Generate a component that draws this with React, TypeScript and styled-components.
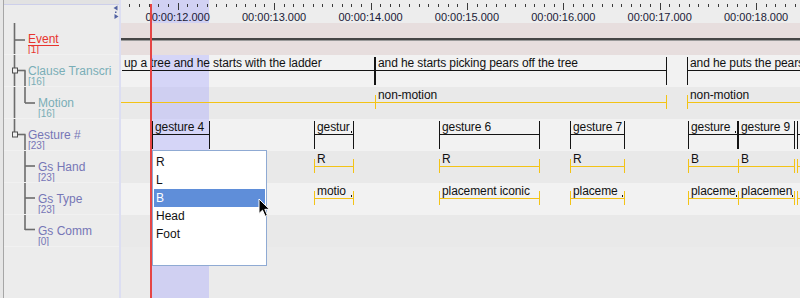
import styled, { createGlobalStyle } from 'styled-components'

const GlobalStyle = createGlobalStyle`
  html, body {
    margin: 0;
    padding: 0;
    background: #ebebeb;
  }
  body {
    font-family: 'Liberation Sans', Arial, sans-serif;
  }
`

// time axis: page x of 00:00:12.000 is 177.7, the time view starts at page x 121
const VIEW_X = 121
const PX_PER_SEC = 96.4
const SEC12 = 177.7 - VIEW_X
const YELLOW = '#f3c316'
const INK = '#141414'

type Seg = { x1: number; x2: number; text?: string; open?: boolean; cut?: boolean }

const clauses: Seg[] = [
  { x1: 121, x2: 374, text: 'up a tree and he starts with the ladder', open: true },
  { x1: 375, x2: 666, text: 'and he starts picking pears off the tree' },
  { x1: 687, x2: 900, text: 'and he puts the pears' },
]

const motions: Seg[] = [
  { x1: 121, x2: 375, open: true },
  { x1: 375, x2: 666, text: 'non-motion' },
  { x1: 687, x2: 900, text: 'non-motion' },
]

const gestures: Seg[] = [
  { x1: 152, x2: 209, text: 'gesture 4' },
  { x1: 314, x2: 353, text: 'gestur', cut: true },
  { x1: 439, x2: 539, text: 'gesture 6' },
  { x1: 570, x2: 624, text: 'gesture 7' },
  { x1: 688, x2: 737, text: 'gesture', cut: true },
  { x1: 738, x2: 794, text: 'gesture 9' },
  { x1: 797, x2: 900 },
]

const hands: Seg[] = [
  { x1: 152, x2: 209 },
  { x1: 314, x2: 353, text: 'R' },
  { x1: 439, x2: 539, text: 'R' },
  { x1: 570, x2: 624, text: 'R' },
  { x1: 688, x2: 738, text: 'B' },
  { x1: 738, x2: 794, text: 'B' },
  { x1: 797, x2: 900 },
]

const types: Seg[] = [
  { x1: 152, x2: 209 },
  { x1: 314, x2: 353, text: 'motio', cut: true },
  { x1: 439, x2: 539, text: 'placement iconic' },
  { x1: 570, x2: 624, text: 'placeme', cut: true },
  { x1: 688, x2: 738, text: 'placeme', cut: true },
  { x1: 738, x2: 794, text: 'placemen', cut: true },
  { x1: 797, x2: 900 },
]

const tiers = [
  { name: 'Event', count: 1, level: 0, color: '#e8342e', active: true },
  { name: 'Clause Transcri', count: 16, level: 0, color: '#7aaeb7' },
  { name: 'Motion', count: 16, level: 1, color: '#7aaeb7' },
  { name: 'Gesture #', count: 23, level: 0, color: '#7676b6' },
  { name: 'Gs Hand', count: 23, level: 1, color: '#7676b6' },
  { name: 'Gs Type', count: 23, level: 1, color: '#7676b6' },
  { name: 'Gs Comm', count: 0, level: 1, color: '#7676b6' },
]

const options = ['R', 'L', 'B', 'Head', 'Foot']

const Screen = styled.div`
  display: flex;
  width: 800px;
  height: 298px;
  overflow: hidden;
  background: #ebebeb;
`

/* ---------- tier names ---------- */

const LeftPanel = styled.div`
  width: ${VIEW_X}px;
  flex: none;
  display: flex;
  background: #e6e6e6;
`

const Frame = styled.div`
  flex: 1;
  margin-left: 3px;
  display: flex;
  flex-direction: column;
  background: #ececec;
  border-left: 1px solid #a6a6a6;
  border-right: 2px solid #dcdef2;
`

const PanelHeader = styled.div`
  height: 23px;
  box-sizing: border-box;
  flex: none;
  border-top: 4px solid #e2e2e2;
  display: flex;
  justify-content: flex-end;
  align-items: flex-start;
  padding-top: 1px;
  box-shadow: inset 0 1px 0 #cdcfea;
`

const TierTree = styled.div`
  position: relative;
  flex: 1;
  display: flex;
  flex-direction: column;
`

const TreeLines = styled.svg`
  position: absolute;
  left: 0;
  top: 0;
`

const TierLabel = styled.div<{ $level: number; $color: string }>`
  position: relative;
  height: 32px;
  box-sizing: border-box;
  padding: 10px 0 0 ${(p) => 24 + p.$level * 10}px;
  display: flex;
  flex-direction: column;
  align-items: flex-start;
  color: ${(p) => p.$color};
  border-bottom: 1px solid #f1f1f1;
  overflow: hidden;
`

const TierName = styled.span<{ $active?: boolean }>`
  display: inline-block;
  font-size: 12px;
  line-height: 12px;
  white-space: nowrap;
  box-shadow: ${(p) => (p.$active ? '0 1px 0 currentColor' : 'none')};
`

const TierCount = styled.span`
  font-size: 10px;
  line-height: 8px;
  margin-top: 1px;
`

/* ---------- time view ---------- */

const TimeArea = styled.div`
  position: relative;
  flex: 1;
  display: flex;
  flex-direction: column;
  overflow: hidden;
  background: #ebebeb;
`

const Ruler = styled.div`
  position: relative;
  height: 23px;
  flex: none;
  background: #ededed;
`

const TickMarks = styled.svg`
  position: absolute;
  left: 0;
  top: 0;
  z-index: 2;
`

const TimeLabel = styled.span`
  position: absolute;
  top: 11px;
  transform: translateX(-50%);
  font-size: 11px;
  line-height: 12px;
  color: #1a1a36;
  white-space: nowrap;
  z-index: 2;
`

const TierRow = styled.div<{ $shade: 'event' | 'light' | 'dark' }>`
  position: relative;
  height: 32px;
  flex: none;
  background: ${(p) => (p.$shade === 'event' ? '#e7dede' : p.$shade === 'light' ? '#f2f2f2' : '#e9e9e9')};
  ${(p) => (p.$shade === 'event' ? 'z-index: 2;' : '')}
`

const EventLine = styled.div`
  position: absolute;
  left: 0;
  right: 0;
  top: 15px;
  height: 2px;
  background: #464646;
  box-shadow: 0 1px 0 #9a9a9a;
`

const Block = styled.div<{ $open?: boolean }>`
  position: absolute;
  z-index: 2;
  top: 2px;
  height: 28px;
  box-sizing: border-box;
  border-left: 1px solid ${(p) => (p.$open ? 'transparent' : INK)};
  border-right: 1px solid ${INK};
  overflow: hidden;

  &::after {
    content: '';
    position: absolute;
    left: 0;
    right: 0;
    top: 13px;
    height: 1px;
    background: ${INK};
  }
`

const DepBlock = styled.div`
  position: absolute;
  z-index: 2;
  top: 0;
  height: 32px;
  overflow: hidden;

  &::after {
    content: '';
    position: absolute;
    left: 0;
    right: 0;
    top: 15px;
    height: 1px;
    background: ${YELLOW};
  }
`

const Tick = styled.span<{ $side: 'left' | 'right' }>`
  position: absolute;
  top: 8px;
  height: 14px;
  width: 1px;
  background: ${YELLOW};
  ${(p) => p.$side}: 0;
`

const AnnText = styled.span<{ $dep?: boolean }>`
  position: absolute;
  left: ${(p) => (p.$dep ? 3 : 2)}px;
  top: ${(p) => (p.$dep ? 0.5 : -1.5)}px;
  font-size: 12px;
  line-height: 14px;
  color: #111;
  white-space: nowrap;
  letter-spacing: -0.1px;
`

const CutDot = styled.span<{ $dep?: boolean }>`
  position: absolute;
  right: ${(p) => (p.$dep ? 2 : 1)}px;
  top: ${(p) => (p.$dep ? 12 : 10)}px;
  width: 1px;
  height: 2px;
  background: #111;
`

const Selection = styled.div`
  position: absolute;
  top: 0;
  bottom: 0;
  left: ${152 - VIEW_X}px;
  width: 57px;
  background: rgba(160, 160, 255, 0.36);
  z-index: 1;
  pointer-events: none;
`

const Crosshair = styled.div`
  position: absolute;
  top: 4px;
  bottom: 0;
  left: ${150 - VIEW_X}px;
  width: 2px;
  background-color: #e54545;
  z-index: 3;
`

const Popup = styled.ul`
  position: absolute;
  left: ${152 - VIEW_X}px;
  top: 150px;
  width: 115px;
  height: 116px;
  box-sizing: border-box;
  margin: 0;
  padding: 2px 1px 0;
  list-style: none;
  background: #fff;
  border: 1px solid #8faad3;
  z-index: 4;
`

const Option = styled.li<{ $selected?: boolean }>`
  height: 18px;
  padding-left: 2px;
  font-size: 12px;
  line-height: 18px;
  color: ${(p) => (p.$selected ? '#fff' : '#111')};
  background: ${(p) => (p.$selected ? '#5f8ed9' : 'transparent')};
`

const Pointer = styled.svg`
  position: absolute;
  left: ${258 - VIEW_X}px;
  top: 198px;
  z-index: 5;
`

function Annotation({ seg }: { seg: Seg }) {
  return (
    <Block $open={seg.open} style={{ left: seg.x1 - VIEW_X, width: seg.x2 - seg.x1 + 1 }}>
      {seg.text && <AnnText>{seg.text}</AnnText>}
      {seg.cut && <CutDot />}
    </Block>
  )
}

function DepAnnotation({ seg }: { seg: Seg }) {
  return (
    <DepBlock style={{ left: seg.x1 - VIEW_X, width: seg.x2 - seg.x1 + 1 }}>
      {!seg.open && <Tick $side="left" />}
      <Tick $side="right" />
      {seg.text && <AnnText $dep>{seg.text}</AnnText>}
      {seg.cut && <CutDot $dep />}
    </DepBlock>
  )
}

function ZoomIcon() {
  return (
    <svg width="6" height="14" viewBox="0 0 6 14">
      <polygon points="4.5,0.5 0.5,3 4.5,5.5" fill="#5262a2" />
      <rect x="2" y="6.5" width="1.5" height="1.5" fill="#5262a2" />
      <polygon points="1.5,9 5.5,11.5 1.5,14" fill="#5262a2" />
    </svg>
  )
}

function Tree() {
  const c = '#6c6c6c'
  return (
    <TreeLines width="40" height="260">
      <g stroke={c} strokeWidth="1.6" fill="none">
        <line x1="10.5" y1="0" x2="10.5" y2="109" />
        <line x1="10.5" y1="17" x2="21" y2="17" />
        <line x1="13" y1="47.5" x2="21.5" y2="47.5" />
        <line x1="21" y1="47.5" x2="21" y2="80" />
        <line x1="21" y1="80" x2="31" y2="80" />
        <line x1="13" y1="111.5" x2="21.5" y2="111.5" />
        <line x1="21" y1="111.5" x2="21" y2="207" />
        <line x1="21" y1="143" x2="31" y2="143" />
        <line x1="21" y1="175" x2="31" y2="175" />
        <line x1="21" y1="206.5" x2="31" y2="206.5" />
      </g>
      <rect x="8.5" y="45" width="5" height="5" fill="#efefef" stroke="#505050" strokeWidth="1" />
      <rect x="8.5" y="109" width="5" height="5" fill="#efefef" stroke="#505050" strokeWidth="1" />
    </TreeLines>
  )
}

function TimeRuler() {
  const ticks = Array.from({ length: 72 }, (_, i) => ({ x: Math.round(SEC12 - 5 * 9.64 + i * 9.64), major: (i - 5) % 10 === 0 }))
  const labels = Array.from({ length: 7 }, (_, k) => ({ x: SEC12 + k * PX_PER_SEC, t: `00:00:${12 + k}.000` }))
  return (
    <Ruler>
      <TickMarks width="680" height="23">
        {ticks.map((t, i) => (
          <rect key={i} x={t.x} y={t.major ? 3 : 4} width="1" height={t.major ? 7 : 3} fill="#3a3a3a" />
        ))}
      </TickMarks>
      {labels.map((l) => (
        <TimeLabel key={l.t} style={{ left: l.x }}>
          {l.t}
        </TimeLabel>
      ))}
    </Ruler>
  )
}

export default function App() {
  return (
    <Screen>
      <GlobalStyle />
      <LeftPanel>
        <Frame>
          <PanelHeader>
            <ZoomIcon />
          </PanelHeader>
          <TierTree>
            <Tree />
            {tiers.map((t) => (
              <TierLabel key={t.name} $level={t.level} $color={t.color}>
                <TierName $active={t.active}>{t.name}</TierName>
                <TierCount>[{t.count}]</TierCount>
              </TierLabel>
            ))}
          </TierTree>
        </Frame>
      </LeftPanel>
      <TimeArea>
        <TimeRuler />
        <TierRow $shade="event">
          <EventLine />
        </TierRow>
        <TierRow $shade="light">
          {clauses.map((s, i) => (
            <Annotation key={i} seg={s} />
          ))}
        </TierRow>
        <TierRow $shade="dark">
          {motions.map((s, i) => (
            <DepAnnotation key={i} seg={s} />
          ))}
        </TierRow>
        <TierRow $shade="light">
          {gestures.map((s, i) => (
            <Annotation key={i} seg={s} />
          ))}
        </TierRow>
        <TierRow $shade="dark">
          {hands.map((s, i) => (
            <DepAnnotation key={i} seg={s} />
          ))}
        </TierRow>
        <TierRow $shade="light">
          {types.map((s, i) => (
            <DepAnnotation key={i} seg={s} />
          ))}
        </TierRow>
        <TierRow $shade="dark" />
        <Selection />
        <Crosshair />
        <Popup>
          {options.map((o) => (
            <Option key={o} $selected={o === 'B'}>
              {o}
            </Option>
          ))}
        </Popup>
        <Pointer width="13" height="20" viewBox="0 0 13 20">
          <path d="M1 1 L1 15.5 L4.5 12.2 L7.2 18.3 L9.4 17.3 L6.8 11.3 L11.5 11.3 Z" fill="#000" stroke="#fff" strokeWidth="1" strokeLinejoin="round" />
        </Pointer>
      </TimeArea>
    </Screen>
  )
}
